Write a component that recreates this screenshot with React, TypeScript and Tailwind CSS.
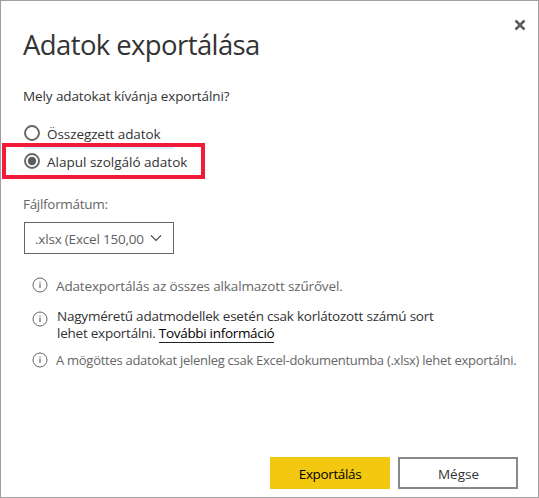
import type { ReactNode } from 'react';

function InfoIcon() {
  return (
    <svg width="16" height="16" viewBox="0 0 16 16" fill="none" className="shrink-0 text-[#666]">
      <circle cx="8" cy="8" r="7" stroke="currentColor" strokeWidth="1" />
      <path d="M8 6.6v4.4M8 4.4v1.2" stroke="currentColor" strokeWidth="1.2" />
    </svg>
  );
}

function Radio({ checked, children }: { checked?: boolean; children: ReactNode }) {
  return (
    <label className="flex h-5 items-center gap-[7px]">
      <svg width="16" height="16" viewBox="0 0 16 16" className="shrink-0">
        <circle cx="8" cy="8" r="7" fill="white" stroke="#666" strokeWidth="1.9" />
        {checked && <circle cx="8" cy="8" r="4.2" fill="#5c5c5c" />}
      </svg>
      {children}
    </label>
  );
}

export default function App() {
  return (
    <div className="flex h-[498px] w-[539px] flex-col whitespace-nowrap border border-[#a0a0a0] bg-white font-['Open_Sans','Noto_Sans',sans-serif] text-[13.5px] leading-5 text-[#333]">
      <header className="flex h-[72px] justify-between pl-[22px] pr-[11px]">
        <h1 className="pt-[26px] text-[27.5px] leading-9 tracking-[-0.6px] text-[#333]">Adatok exportálása</h1>
        <button aria-label="Bezárás" className="mt-[17px] size-[14px]">
          <svg width="14" height="14" viewBox="0 0 14 14">
            <path d="M2.5 2.5l9 9M11.5 2.5l-9 9" stroke="#5c5c5c" strokeWidth="2.5" />
          </svg>
        </button>
      </header>
      <main className="flex flex-col">
        <p className="mt-[13px] h-5 pl-[22px] tracking-[-0.1px]">Mely adatokat kívánja exportálni?</p>
        <div className="mt-[17px] pl-[23px]">
          <Radio><span className="pt-[2px] tracking-[-0.08px]">Összegzett adatok</span></Radio>
        </div>
        <div className="ml-[1px] h-9 w-[203px] border-4 border-[#f31a3a] pl-[18px]">
          <div className="h-[2px] w-[150px] bg-[#d9f2fb]" />
          <div className="mt-[2px]"><Radio checked><span className="pt-[2px]">Alapul szolgáló adatok</span></Radio></div>
        </div>
        <p className="mt-[15px] h-5 pl-[22px] tracking-[-0.3px] text-[#666]">Fájlformátum:</p>
        <div className="ml-[23px] mt-[8px] flex h-8 w-[150px] items-center border border-[#666] pl-[10px] text-[#5f5f5f]">
          <span className="w-[110px] overflow-hidden pt-[2px] tracking-[-0.2px]">.xlsx (Excel 150,00</span>
          <svg width="12" height="8" viewBox="0 0 12 8" className="ml-[5px]" fill="none">
            <path d="M1 1.3l5 5 5-5" stroke="#444" strokeWidth="1.2" />
          </svg>
        </div>
        <ul className="mt-[22px] pl-[31px]">
          <li className="flex h-5 gap-[8px] text-[#666]">
            <div className="pt-px"><InfoIcon /></div>
            <span className="tracking-[-0.15px]">Adatexportálás az összes alkalmazott szűrővel.</span>
          </li>
          <li className="mt-[12px] flex h-[37px] gap-[9px] leading-[17px]">
            <div className="pt-[3px]"><InfoIcon /></div>
            <p>
              <span className="tracking-[-0.22px]">Nagyméretű adatmodellek esetén csak korlátozott számú sort</span>
              <br />
              <span className="tracking-[-0.24px]">lehet exportálni. </span>
              <a className="inline-block h-[18px] border-b border-[#222] tracking-[-0.31px] text-black">További információ</a>
            </p>
          </li>
          <li className="mt-[5px] flex h-5 gap-[8px] text-[#666]">
            <div className="pt-[2px]"><InfoIcon /></div>
            <span className="text-[13px] tracking-[-0.275px]">A mögöttes adatokat jelenleg csak Excel-dokumentumba (.xlsx) lehet exportálni.</span>
          </li>
        </ul>
      </main>
      <footer className="mb-[8px] mt-auto flex justify-end gap-2 pr-[20px]">
        <button className="h-8 w-[120px] bg-[#f2c811] pt-[2px] tracking-[-0.36px] text-black">Exportálás</button>
        <button className="h-8 w-[120px] border-2 border-[#888] pl-px pt-[2px] text-[#333]">Mégse</button>
      </footer>
    </div>
  );
}
